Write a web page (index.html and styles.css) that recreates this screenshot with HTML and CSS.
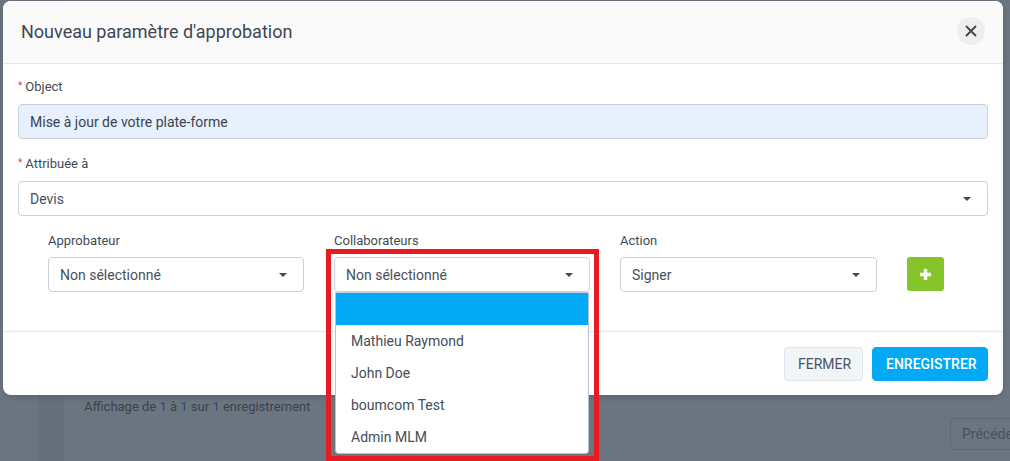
FILE: index.html
```html
<!DOCTYPE html>
<html lang="fr">
<head>
<meta charset="utf-8">
<title>Nouveau paramètre d'approbation</title>
<link rel="stylesheet" href="styles.css">
</head>
<body>
<div class="page">
  <div class="rail"></div>
  <div class="rail-strip"></div>
  <main class="main">
    <div class="list-footer">
      <span class="info">Affichage de <span class="num">1</span> à <span class="num">1</span> sur <span class="num">1</span> enregistrement</span>
      <button class="prev">Précédent</button>
    </div>
  </main>
</div>

<div class="modal">
  <div class="modal-header">
    <h2 class="modal-title">Nouveau paramètre d'approbation</h2>
    <button class="close" aria-label="Fermer">
      <svg width="12" height="12" viewBox="0 0 12 12"><path d="M1.5 1.5 L10.5 10.5 M10.5 1.5 L1.5 10.5" stroke="#444" stroke-width="1.8" stroke-linecap="round"/></svg>
    </button>
  </div>
  <div class="modal-body">
    <div class="group">
      <label class="label"><span class="req">*</span>Object</label>
      <div class="input filled">Mise à jour de votre plate-forme</div>
    </div>
    <div class="group">
      <label class="label"><span class="req">*</span>Attribuée à</label>
      <div class="select wide"><span>Devis</span><i class="caret"></i></div>
    </div>
    <div class="approvers">
      <div class="field">
        <label class="label">Approbateur</label>
        <div class="select"><span>Non sélectionné</span><i class="caret"></i></div>
      </div>
      <div class="field">
        <label class="label">Collaborateurs</label>
        <div class="select"><span>Non sélectionné</span><i class="caret"></i></div>
        <ul class="dropdown">
          <li class="active"></li>
          <li>Mathieu Raymond</li>
          <li>John Doe</li>
          <li>boumcom Test</li>
          <li>Admin MLM</li>
        </ul>
      </div>
      <div class="field">
        <label class="label">Action</label>
        <div class="select"><span>Signer</span><i class="caret"></i></div>
      </div>
      <div class="field add-field">
        <button class="add" aria-label="Ajouter">
          <svg width="13" height="13" viewBox="0 0 13 13"><path d="M6.5 1 V12 M1 6.5 H12" stroke="#fff" stroke-width="3.4"/></svg>
        </button>
      </div>
    </div>
  </div>
  <div class="modal-footer">
    <button class="btn btn-light">FERMER</button>
    <button class="btn btn-primary">ENREGISTRER</button>
  </div>
</div>

<div class="annot"></div>
</body>
</html>
```

FILE: styles.css
```css
* { box-sizing: border-box; }
html, body { margin: 0; padding: 0; }
body {
  width: 1010px;
  height: 461px;
  overflow: hidden;
  position: relative;
  background: #6b7580;
  font-family: Roboto, "Liberation Sans", sans-serif;
}
.page {
  display: flex;
  height: 461px;
}
.rail { width: 38px; background: #6b7580; }
.rail-strip { width: 26px; background: #65707c; }
.main {
  flex: 1;
  padding: 399px 0 0 20px;
  overflow: hidden;
}
.list-footer {
  display: flex;
  justify-content: space-between;
  align-items: flex-start;
}
.info {
  font-size: 13px;
  line-height: 16px;
  color: #39424e;
}
.info .num { color: #274f78; }
.prev {
  margin-top: 19px;
  margin-right: -30px;
  width: 90px;
  height: 32px;
  background: transparent;
  border: 1px solid #5e6874;
  border-radius: 4px;
  color: #48525e;
  font-family: inherit;
  font-size: 14px;
  text-align: left;
  padding-left: 11px;
}

.modal {
  position: absolute;
  left: 3px;
  top: 1px;
  width: 1000px;
  background: #fff;
  border-radius: 8px;
  box-shadow: 0 2px 6px rgba(0,0,0,0.15);
  z-index: 2;
}
.modal-header {
  height: 63px;
  background: #fafafa;
  border-bottom: 1px solid #e3e6ea;
  border-radius: 8px 8px 0 0;
  display: flex;
  align-items: center;
  justify-content: space-between;
  padding: 0 18px 2px 18px;
}
.modal-title {
  margin: 0;
  font-size: 18px;
  font-weight: 400;
  color: #3d4654;
}
.close {
  width: 28px;
  height: 28px;
  border-radius: 50%;
  border: none;
  background: #eeeeee;
  display: flex;
  align-items: center;
  justify-content: center;
  padding: 0;
}
.modal-body {
  padding: 15px 15px 39px 15px;
  border-bottom: 1px solid #e3e6ea;
}
.group { margin-bottom: 17px; }
.label {
  display: block;
  height: 16px;
  font-size: 13px;
  line-height: 16px;
  color: #414a57;
  margin-bottom: 9px;
}
.req {
  color: #e8434b;
  font-size: 10px;
  line-height: 0;
  margin-right: 3px;
  vertical-align: 2px;
}
.input, .select {
  height: 35px;
  border: 1px solid #c8d1dc;
  border-radius: 4px;
  font-size: 14px;
  display: flex;
  align-items: center;
  padding: 0 11px;
  color: #3a4452;
  background: #fff;
}
.input.filled { background: #e8f0fe; }
.select { justify-content: space-between; color: #47505e; }
.caret {
  width: 0;
  height: 0;
  border-left: 4px solid transparent;
  border-right: 4px solid transparent;
  border-top: 4px solid #3f4756;
  margin-right: 5px;
}
.approvers {
  display: grid;
  grid-template-columns: 256px 256px 257px 37px;
  column-gap: 30px;
  padding-left: 30px;
}
.approvers .label { margin-bottom: 8px; }
.field { position: relative; }
.add-field { padding-top: 24px; }
.add {
  width: 37px;
  height: 34px;
  border: none;
  border-radius: 3px;
  background: #86c52a;
  display: flex;
  align-items: center;
  justify-content: center;
  padding: 0;
}
.dropdown {
  position: absolute;
  left: 1px;
  top: 59px;
  width: 254px;
  margin: 0;
  padding: 0;
  list-style: none;
  background: #fff;
  border: 1px solid #b9c3cf;
  border-top-color: #c8d1dc;
  border-radius: 0 0 4px 4px;
  z-index: 3;
}
.dropdown li {
  height: 32px;
  line-height: 32px;
  padding-left: 15px;
  font-size: 14px;
  color: #454d59;
}
.dropdown li.active { background: #03a9f4; }
.modal-footer {
  display: flex;
  justify-content: flex-end;
  gap: 9px;
  padding: 15px 15px 14px 15px;
}
.btn {
  height: 34px;
  border-radius: 4px;
  font-family: inherit;
  font-size: 14px;
  padding: 0 13px;
}
.btn-light {
  width: 79px;
  background: #f2f5f8;
  border: 1px solid #e0e5ea;
  color: #4a5463;
}
.btn-primary {
  width: 116px;
  background: #03a9f4;
  border: 1px solid #03a9f4;
  color: #fff;
  font-weight: 500;
}
.annot {
  position: absolute;
  left: 326px;
  top: 249px;
  width: 273px;
  height: 212px;
  border: 5px solid #e81a22;
  z-index: 4;
}
```
